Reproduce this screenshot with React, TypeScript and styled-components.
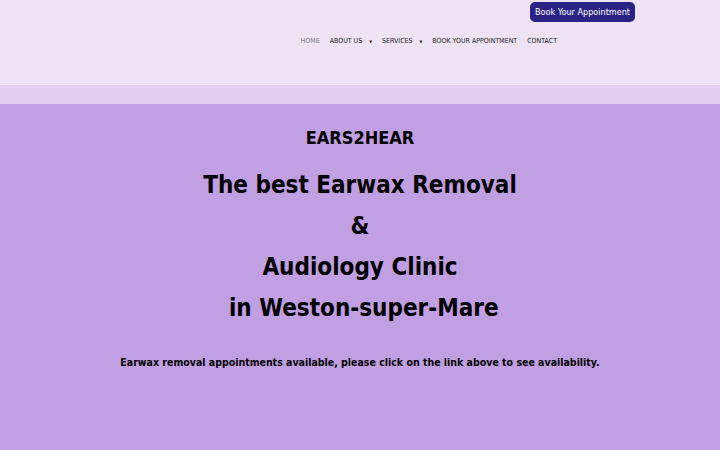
import React from "react";
import styled, { createGlobalStyle } from "styled-components";

const GlobalStyle = createGlobalStyle`
  html, body {
    margin: 0;
    padding: 0;
    background: #c09fe2;
    font-family: "DejaVu Sans Condensed", "DejaVu Sans", sans-serif;
  }
`;

const Header = styled.header`
  background: #f0e2f5;
  height: 84px;
  border-bottom: 1px solid #f3e8f7;
  display: flex;
  flex-direction: column;
  align-items: flex-end;
`;

const TopBar = styled.div`
  width: 100%;
  display: flex;
  justify-content: flex-end;
  padding: 2px 85px 0 0;
  box-sizing: border-box;
`;

const BookButton = styled.a`
  background: #2a2385;
  color: #ffffff;
  font-size: 9px;
  line-height: 20px;
  height: 20px;
  padding: 0 5px;
  border-radius: 5px;
  text-decoration: none;
`;

const Nav = styled.nav`
  display: flex;
  align-items: center;
  gap: 10px;
  margin: 15px 163px 0 0;
`;

const NavItem = styled.a<{ $active?: boolean }>`
  font-size: 7px;
  text-transform: uppercase;
  color: ${(p) => (p.$active ? "#777777" : "#222222")};
  text-decoration: none;
  display: flex;
  align-items: center;
  gap: 7px;
`;

const Caret = styled.span`
  font-size: 4px;
`;

const Band = styled.div`
  height: 19px;
  background: #e5cfee;
`;

const Hero = styled.main`
  text-align: center;
  padding-top: 23px;
  color: #000000;
`;

const Brand = styled.h3`
  font-size: 18px;
  font-weight: bold;
  margin: 0 0 17px;
`;

const Title = styled.h1`
  font-size: 24px;
  font-weight: bold;
  line-height: 41px;
  margin: 0;
`;

const Note = styled.p`
  font-size: 10.5px;
  font-weight: bold;
  margin: 27px 0 0;
`;

export default function App() {
  return (
    <>
      <GlobalStyle />
      <Header>
        <TopBar>
          <BookButton href="#">Book Your Appointment</BookButton>
        </TopBar>
        <Nav>
          <NavItem $active href="#">Home</NavItem>
          <NavItem href="#">
            About Us <Caret>▼</Caret>
          </NavItem>
          <NavItem href="#">
            Services <Caret>▼</Caret>
          </NavItem>
          <NavItem href="#">Book Your Appointment</NavItem>
          <NavItem href="#">Contact</NavItem>
        </Nav>
      </Header>
      <Band />
      <Hero>
        <Brand>EARS2HEAR</Brand>
        <Title>
          The best Earwax Removal
          <br />&amp;
          <br />
          Audiology Clinic
          <br />
          &nbsp;in Weston-super-Mare
        </Title>
        <Note>
          Earwax removal appointments available, please click on the link above to see availability.
        </Note>
      </Hero>
    </>
  );
}
